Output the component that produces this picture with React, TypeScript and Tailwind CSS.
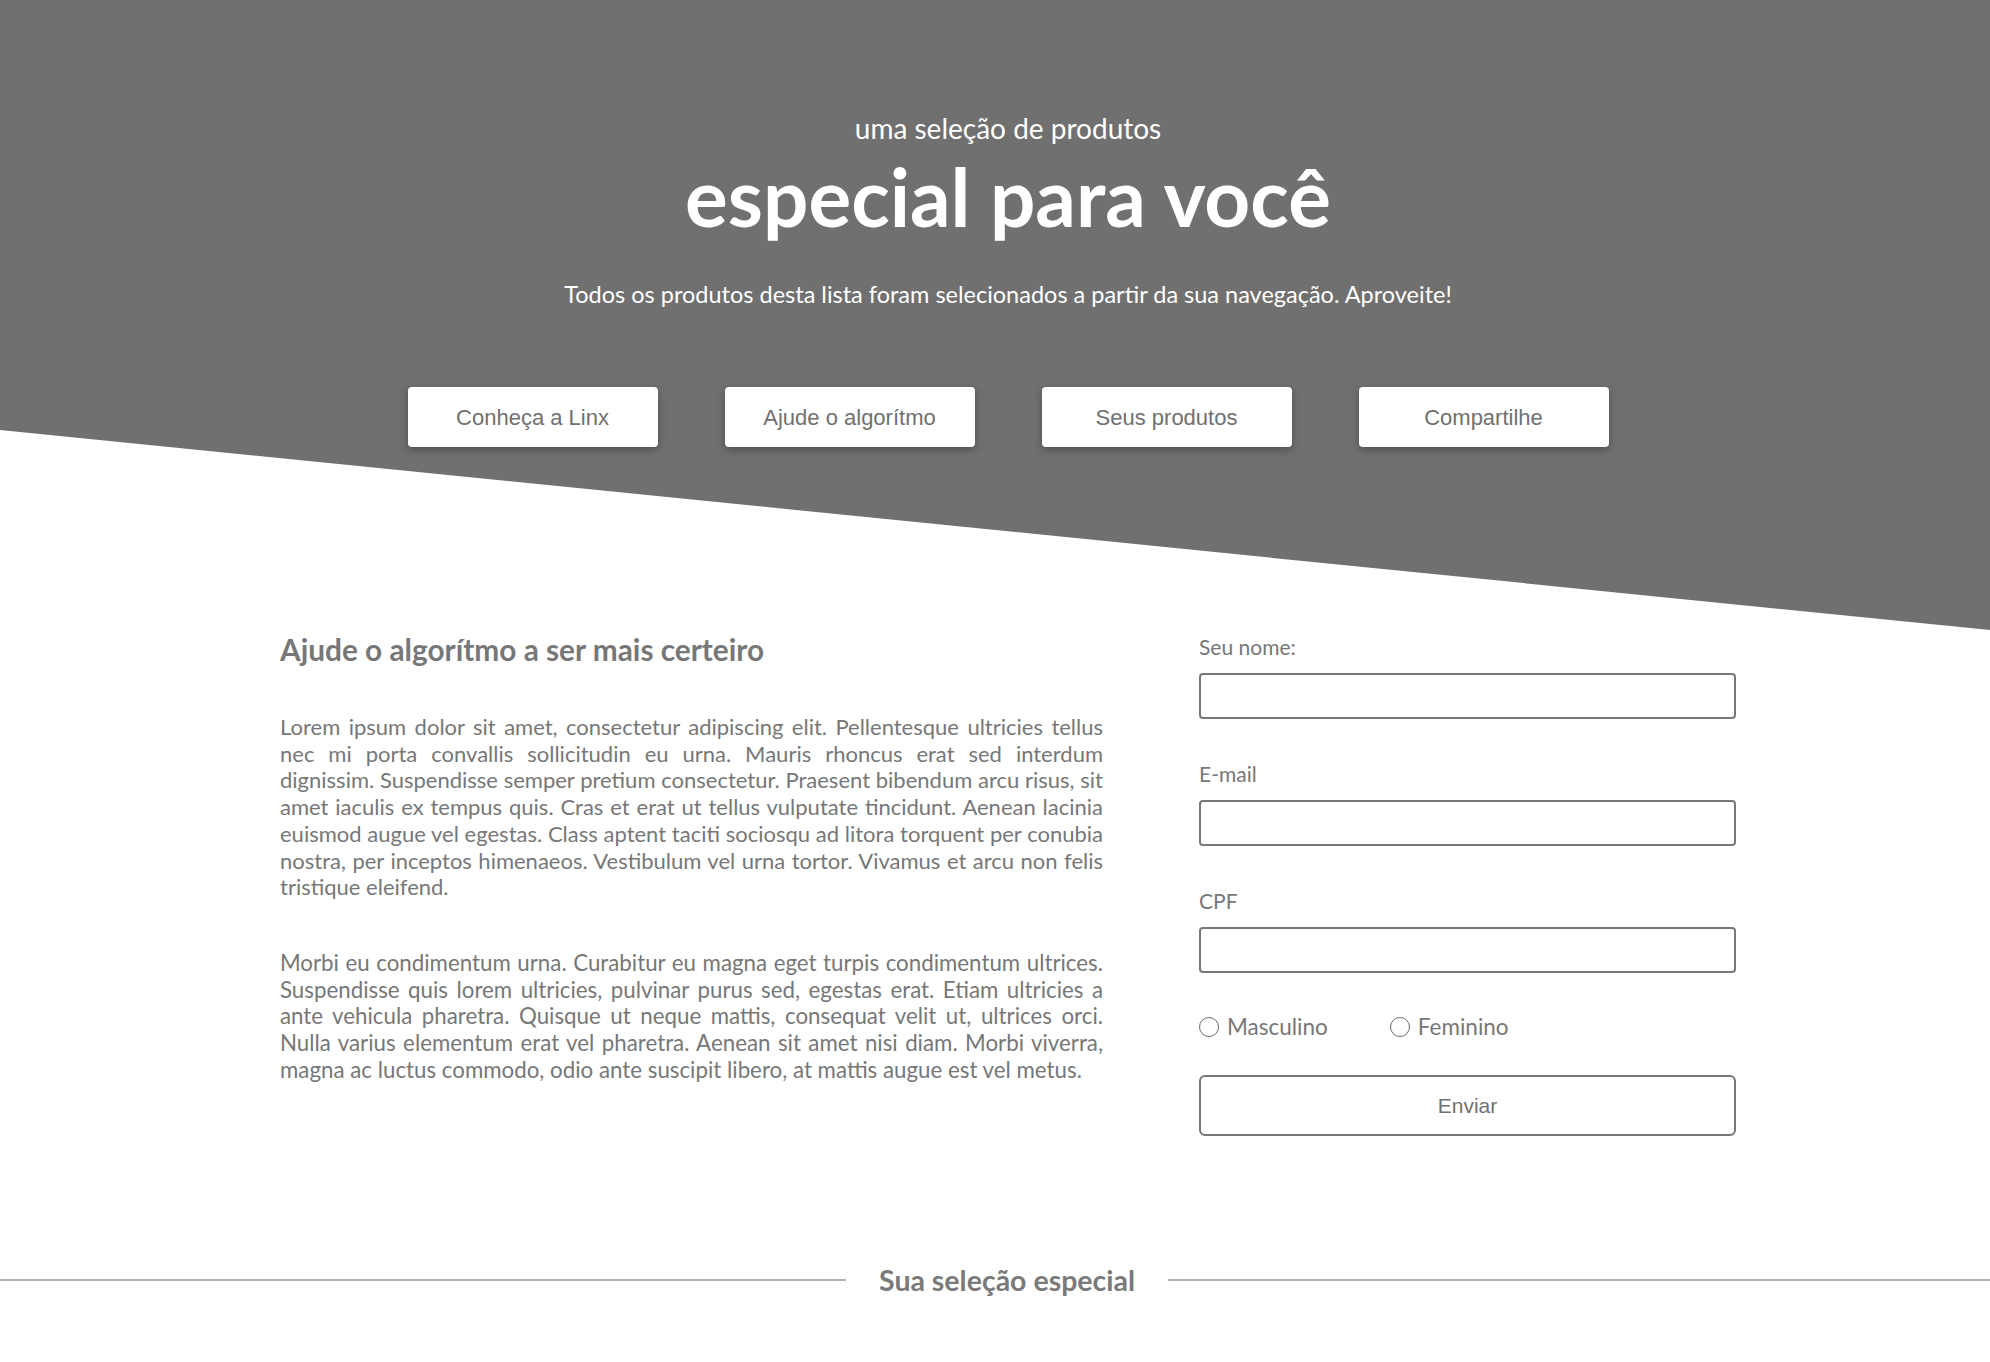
import React from "react";

const navButtons = ["Conheça a Linx", "Ajude o algorítmo", "Seus produtos", "Compartilhe"];

function Field({ label, first }: { label: string; first?: boolean }) {
  return (
    <div className={first ? "" : "mt-[42px]"}>
      <label className="block text-[21px] leading-[26px] text-[#777777]">{label}</label>
      <input
        type="text"
        className="mt-[13px] block h-[46px] w-full rounded-[4px] border-2 border-[#777777] bg-white px-3 outline-none"
      />
    </div>
  );
}

function Radio({ label }: { label: string }) {
  return (
    <label className="flex items-center gap-[8px] text-[22.5px] leading-[26px] text-[#777777]">
      <span className="block h-[20px] w-[20px] rounded-full border-[1.5px] border-[#6a6a6a] bg-white" />
      <span>{label}</span>
    </label>
  );
}

export default function App() {
  return (
    <div className="relative h-[1362px] w-full overflow-hidden bg-white font-['Lato','Noto_Sans',sans-serif]">
      {/* Hero */}
      <section className="h-[630px] bg-[#707070] pt-[112px] [clip-path:polygon(0_0,100%_0,100%_630px,0_430px)]">
        <div className="flex flex-col items-center pl-[26px] text-white">
          <p className="text-[28px] leading-[32px]">uma seleção de produtos</p>
          <h1 className="mt-[7px] text-[80px] font-bold leading-[90px]">especial para você</h1>
          <p className="mt-[39px] text-[23.5px] leading-[28px]">
            Todos os produtos desta lista foram selecionados a partir da sua navegação. Aproveite!
          </p>
          <div className="mt-[79px] flex gap-[67px]">
            {navButtons.map((b) => (
              <button
                key={b}
                className="h-[60px] w-[250px] rounded-[4px] bg-white font-['Liberation_Sans','Arial',sans-serif] text-[22px] text-[#707070] shadow-[0_3px_8px_rgba(0,0,0,0.3)]"
              >
                {b}
              </button>
            ))}
          </div>
        </div>
      </section>

      {/* Main */}
      <section className="flex justify-center pl-[26px]">
        <div className="flex w-[1456px] items-start justify-between">
          <div className="w-[823px] text-[#777777]">
            <h2 className="mt-[3px] text-[29.8px] font-bold leading-[34px]">Ajude o algorítmo a ser mais certeiro</h2>
            <p className="mt-[47px] text-justify text-[22px] leading-[26.7px]">
              Lorem ipsum dolor sit amet, consectetur adipiscing elit. Pellentesque ultricies tellus nec mi porta
              convallis sollicitudin eu urna. Mauris rhoncus erat sed interdum dignissim. Suspendisse semper pretium
              consectetur. Praesent bibendum arcu risus, sit amet iaculis ex tempus quis. Cras et erat ut tellus
              vulputate tincidunt. Aenean lacinia euismod augue vel egestas. Class aptent taciti sociosqu ad litora
              torquent per conubia nostra, per inceptos himenaeos. Vestibulum vel urna tortor. Vivamus et arcu non
              felis tristique eleifend.
            </p>
            <p className="mt-[49px] text-justify text-[22.3px] leading-[26.7px]">
              Morbi eu condimentum urna. Curabitur eu magna eget turpis condimentum ultrices. Suspendisse quis lorem
              ultricies, pulvinar purus sed, egestas erat. Etiam ultricies a ante vehicula pharetra. Quisque ut neque
              mattis, consequat velit ut, ultrices orci. Nulla varius elementum erat vel pharetra. Aenean sit amet
              nisi diam. Morbi viverra, magna ac luctus commodo, odio ante suscipit libero, at mattis augue est vel
              metus.
            </p>
          </div>

          <form className="mt-[4px] w-[537px]">
            <Field label="Seu nome:" first />
            <Field label="E-mail" />
            <Field label="CPF" />
            <div className="mt-[41px] flex gap-[62px]">
              <Radio label="Masculino" />
              <Radio label="Feminino" />
            </div>
            <button
              type="button"
              className="mt-[35px] h-[61px] w-full rounded-[6px] border-2 border-[#777777] bg-white font-['Liberation_Sans','Arial',sans-serif] text-[21px] text-[#707070]"
            >
              Enviar
            </button>
          </form>
        </div>
      </section>

      {/* Section title */}
      <section className="mt-[127px] flex items-center">
        <div className="h-[2px] w-[846px] bg-[#b3b3b3]" />
        <h3 className="mx-[33px] text-[28.5px] font-bold leading-[34px] text-[#7a7a7a]">Sua seleção especial</h3>
        <div className="h-[2px] flex-1 bg-[#b3b3b3]" />
      </section>
    </div>
  );
}
